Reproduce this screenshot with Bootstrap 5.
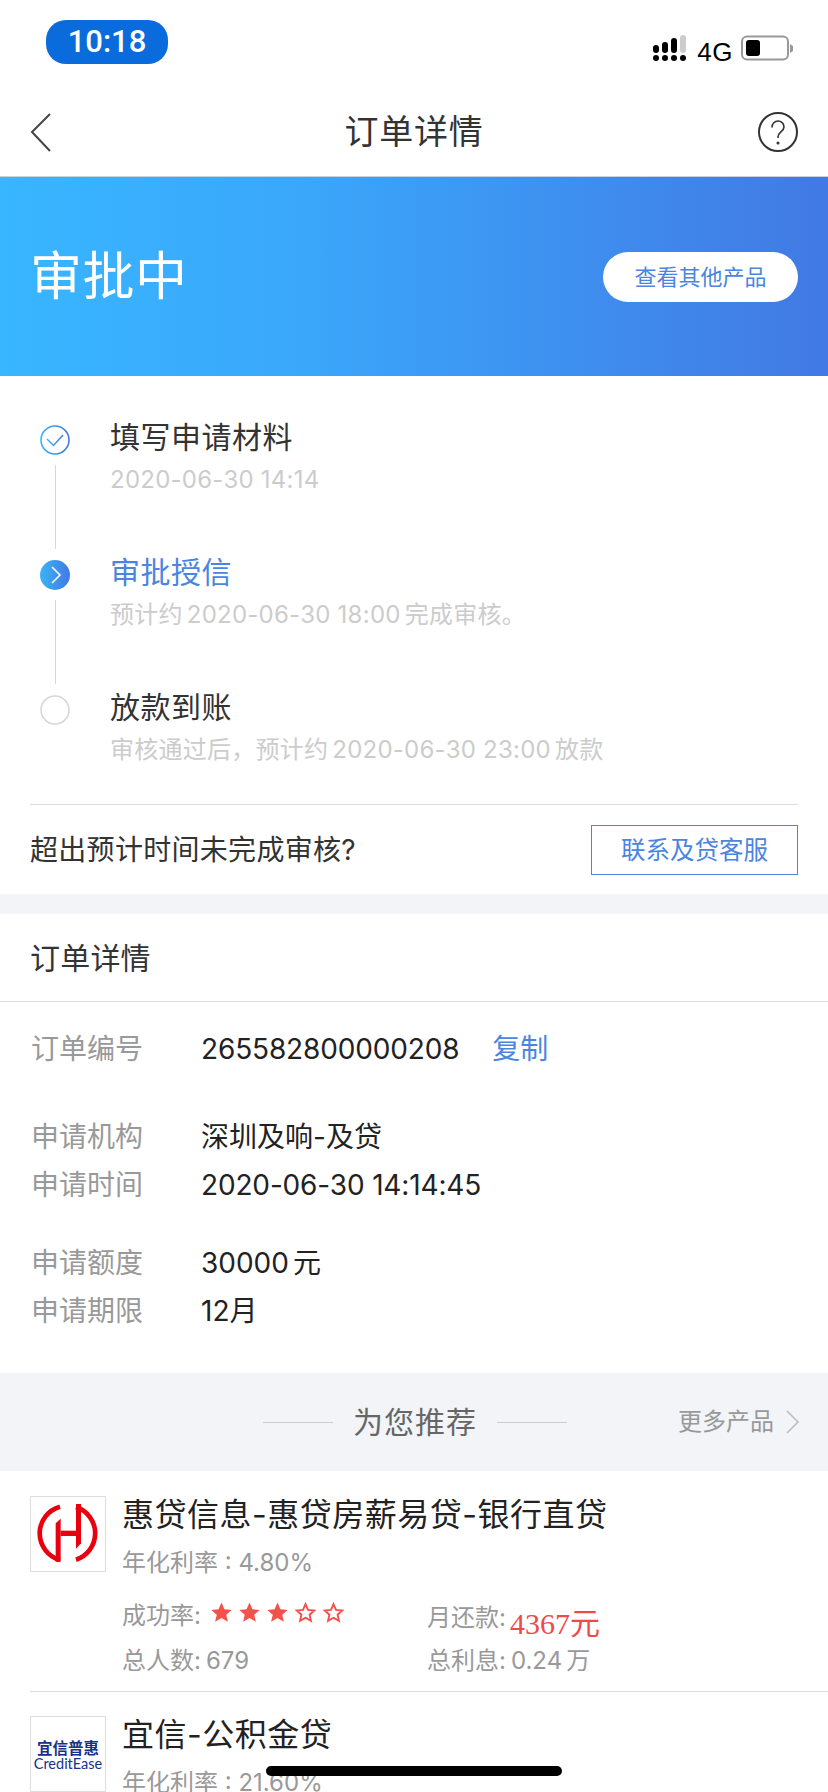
<!doctype html>
<html lang="zh-CN">
<head>
<meta charset="utf-8">
<title>订单详情</title>
<link href="https://cdn.jsdelivr.net/npm/bootstrap@5.3.0/dist/css/bootstrap.min.css" rel="stylesheet">
<style>
body{margin:0;background:#fff;font-family:Inter,"Noto Sans CJK SC",sans-serif;color:#333}
.phone{position:relative;width:828px;height:1792px;overflow:hidden;background:#fff}
.stat-bar{height:88px;padding:20px 34px 0 46px}
.time-pill{width:122px;height:44px;border-radius:20px;background:#0a6cdc;color:#fff;font:500 31px/44px Roboto,sans-serif;text-align:center}
.stat-right{padding-top:15px;gap:8px}
.sig-icon{margin-right:3px}
.net-label{font:400 26px/26px "Liberation Sans",sans-serif;color:#000;letter-spacing:.5px}
.top-nav{height:89px;padding:0 30px;border-bottom:1px solid #c9d3dc}
.nav-side{width:41px;flex:none;display:flex}
.nav-side.end{justify-content:flex-end}
.top-title{font-size:34px;line-height:44px;color:#333;letter-spacing:.8px}
.hero{height:199px;padding:0 30px;background:linear-gradient(90deg,#38b6ff 0%,#3aa8fb 35%,#4279e4 100%)}
.hero-title{font-size:52px;line-height:60px;color:#fff;font-weight:400;letter-spacing:.5px}
.hero-btn{width:195px;height:50px;border-radius:25px;background:#fff;color:#4a85e0;font-size:22px;line-height:50px;text-align:center;border:0;padding:0}
.steps{padding:49px 30px 0}
.step{display:flex}
.step-mark{width:80px;flex:none}
.dot{width:30px;height:30px;margin-left:10px;display:block}
.step-line{width:1px;height:84px;margin:10px 0 11px 25px;background:#d8d8d8}
.step-title{font-size:30px;line-height:30px;margin-top:-3px;margin-bottom:13px;color:#333;letter-spacing:.5px}
.step-title.now{color:#4a85e0}
.step-sub{font-size:24px;line-height:30px;color:#ccc;white-space:nowrap;letter-spacing:.25px}
.sub-num{margin:0 4px}
.step-end{height:109px}
.help-row{height:90px;margin:0 30px;border-top:1px solid #ddd}
.help-text{font-size:28px;color:#333;letter-spacing:.3px}
.help-btn{width:207px;height:50px;border:1px solid #4a85e0;color:#4a85e0;font-size:24.5px;line-height:48px;text-align:center;background:#fff;padding:0;border-radius:0}
.gap-band{height:20px;background:#f2f4f8}
.sec-head{height:88px;padding:0 30px;border-bottom:1px solid #ddd;font-size:30px;line-height:88px;color:#333;letter-spacing:.2px}
.info{padding:23px 31px 38px}
.info-row{display:flex;height:48px;align-items:center;font-size:28px}
.info-label{width:170px;color:#999;font-size:28px}
.info-val{color:#222}
.num-tight{letter-spacing:-.15px}
.unit-gap{margin-left:4px}
.colon-gap{margin-left:5px}
.copy-link{color:#4a85e0;margin-left:33px;text-decoration:none}
.sp-a{margin-bottom:40px}
.sp-b{margin-bottom:30px}
.rec-band{height:98px;background:#f2f4f8;padding:0 28px 0 30px;display:grid;grid-template-columns:1fr auto 1fr;align-items:center}
.rec-title{display:flex;align-items:center;gap:20px;font-size:30px;color:#666;letter-spacing:1px}
.rec-rule{width:70px;height:1px;background:#ccc}
.more-link{justify-self:end;font-size:24px;color:#999;display:flex;align-items:center;gap:11px;text-decoration:none}
.prod{display:flex;margin-left:30px;padding-top:25px;height:221px;border-bottom:1px solid #ddd}
.prod.last{padding-top:24px;border-bottom:0;height:auto}
.prod-logo{width:76px;height:76px;flex:none;border:1px solid #ddd;display:flex;flex-direction:column;align-items:center;justify-content:center}
.prod-logo svg{display:block}
.prod-body{margin-left:16px;margin-top:1px}
.prod-name{font-size:32px;line-height:36px;color:#222;letter-spacing:.5px;white-space:nowrap}
.prod-rate{font-size:24px;line-height:36px;margin-top:12px;color:#999}
.prod-stats{display:grid;grid-template-columns:305px 1fr;margin-top:17px;row-gap:7px;font-size:24px;line-height:36px;color:#999}
.stars{display:inline-flex;gap:7px;vertical-align:1px;margin-left:10px}
.stars svg{width:21px;height:21px;display:block}
.pay{font:30px/36px "Liberation Serif",serif;color:#ee4a4a;position:relative;top:8px;margin-left:4px}
.logo-cn{font:700 15.5px/18px "Noto Sans CJK SC",sans-serif;color:#14318c}
.logo-en{font:400 14.500px/15px Lato,sans-serif;color:#14318c}
.home-bar{position:absolute;left:266px;top:1766px;width:296px;height:10px;border-radius:5px;background:#000}
</style>
</head>
<body>
<div class="phone">
  <div class="stat-bar d-flex justify-content-between">
    <div class="time-pill">10:18</div>
    <div class="stat-right d-flex align-items-start">
      <svg class="sig-icon" width="33" height="27" viewBox="0 0 33 27"><g fill="#000"><circle cx="3" cy="23" r="3"/><circle cx="12" cy="23" r="3"/><circle cx="21" cy="23" r="3"/><circle cx="30" cy="23" r="3"/><rect x="0" y="10" width="6" height="8" rx="3"/><rect x="9" y="7" width="6" height="11" rx="3"/><rect x="18" y="3" width="6" height="15" rx="3"/></g><rect x="27" y="0" width="6" height="18" rx="3" fill="#ccc"/></svg>
      <span class="net-label mt-1">4G</span>
      <svg width="53" height="26" viewBox="0 0 53 26"><rect x="1" y="1.5" width="46" height="23" rx="5" fill="none" stroke="#999" stroke-width="2"/><rect x="5" y="5" width="14" height="16" rx="3" fill="#000"/><path d="M49 9l3 2v5l-3 2z" fill="#999"/></svg>
    </div>
  </div>
  <div class="top-nav d-flex align-items-center justify-content-between">
    <div class="nav-side"><svg width="22" height="40" viewBox="0 0 22 40" class="d-block"><path d="M20 2 2 20l18 19" fill="none" stroke="#444" stroke-width="2"/></svg></div>
    <div class="top-title">订单详情</div>
    <div class="nav-side end"><svg width="40" height="40" viewBox="0 0 40 40" class="d-block"><circle cx="20" cy="20" r="19" fill="none" stroke="#333" stroke-width="2"/><path d="M14 15.500c0-4 2.800-6.500 6-6.500s6 2.500 6 6c0 4.500-6 5-6 10v1" fill="none" stroke="#333" stroke-width="1.600"/><circle cx="20" cy="31" r="1.500" fill="#333"/></svg></div>
  </div>
  <div class="hero d-flex align-items-center justify-content-between">
    <div class="hero-title">审批中</div>
    <button class="hero-btn" type="button">查看其他产品</button>
  </div>
  <div class="steps">
    <div class="step">
      <div class="step-mark">
        <svg class="dot" viewBox="0 0 30 30"><defs><linearGradient id="g1" x1="0" x2="1"><stop offset="0" stop-color="#3bb4f5"/><stop offset="1" stop-color="#4279e4"/></linearGradient></defs><circle cx="15" cy="15" r="14" fill="none" stroke="url(#g1)" stroke-width="1.600"/><path d="M7 14l6.500 6.500L23 10" fill="none" stroke="url(#g1)" stroke-width="1.500"/></svg>
        <div class="step-line"></div>
      </div>
      <div>
        <div class="step-title">填写申请材料</div>
        <div class="step-sub">2020-06-30 14:14</div>
      </div>
    </div>
    <div class="step">
      <div class="step-mark">
        <svg class="dot" viewBox="0 0 30 30"><circle cx="15" cy="15" r="15" fill="url(#g1)"/><path d="M12 7l8 8-8 8" fill="none" stroke="#fff" stroke-width="1.600"/></svg>
        <div class="step-line"></div>
      </div>
      <div>
        <div class="step-title now">审批授信</div>
        <div class="step-sub">预计约<span class="sub-num">2020-06-30 18:00</span>完成审核。</div>
      </div>
    </div>
    <div class="step step-end">
      <div class="step-mark">
        <svg class="dot" viewBox="0 0 30 30"><circle cx="15" cy="15" r="14" fill="none" stroke="#d8d8d8" stroke-width="1.600"/></svg>
      </div>
      <div>
        <div class="step-title">放款到账</div>
        <div class="step-sub">审核通过后，预计约<span class="sub-num">2020-06-30 23:00</span>放款</div>
      </div>
    </div>
  </div>
  <div class="help-row d-flex align-items-center justify-content-between">
    <span class="help-text">超出预计时间未完成审核?</span>
    <button class="help-btn" type="button">联系及贷客服</button>
  </div>
  <div class="gap-band"></div>
  <div class="sec-head">订单详情</div>
  <div class="info">
    <div class="info-row sp-a"><span class="info-label">订单编号</span><span class="info-val num-tight">265582800000208</span><a class="copy-link" href="#">复制</a></div>
    <div class="info-row"><span class="info-label">申请机构</span><span class="info-val">深圳及响-及贷</span></div>
    <div class="info-row sp-b"><span class="info-label">申请时间</span><span class="info-val num-tight">2020-06-30 14:14:45</span></div>
    <div class="info-row"><span class="info-label">申请额度</span><span class="info-val">30000<span class="unit-gap">元</span></span></div>
    <div class="info-row"><span class="info-label">申请期限</span><span class="info-val">12月</span></div>
  </div>
  <div class="rec-band">
    <span></span>
    <div class="rec-title"><span class="rec-rule"></span>为您推荐<span class="rec-rule"></span></div>
    <a class="more-link" href="#">更多产品<svg width="15" height="24" viewBox="0 0 15 24"><path d="M2 1l11 11L2 23" fill="none" stroke="#bbb" stroke-width="1.500"/></svg></a>
  </div>
  <div class="prod">
    <div class="prod-logo">
      <svg width="74" height="74" viewBox="18 21 222 222"><g fill="#e8000f"><path d="M105 50A83 83 0 0 0 105 210" fill="none" stroke="#e8000f" stroke-width="14"/><path d="M153 51A83 83 0 0 1 153 209" fill="none" stroke="#e8000f" stroke-width="14"/><path d="M92 100 107 86V215H92Z"/><path d="M153 42H168V160L153 176Z"/><rect x="107" y="122" width="46" height="16"/></g></svg>
    </div>
    <div class="prod-body">
      <div class="prod-name">惠贷信息-惠贷房薪易贷-银行直贷</div>
      <div class="prod-rate">年化利率 : 4.80%</div>
      <div class="prod-stats">
        <div>成功率:<span class="stars">
          <svg viewBox="0 0 20 20"><path d="M10 .5l2.800 6.400 6.900.6-5.200 4.600 1.600 6.800L10 15.300l-6.100 3.600 1.600-6.800L.3 7.500l6.900-.6z" fill="#f5504a"/></svg>
          <svg viewBox="0 0 20 20"><path d="M10 .5l2.800 6.400 6.900.6-5.200 4.600 1.600 6.800L10 15.300l-6.100 3.600 1.600-6.800L.3 7.500l6.900-.6z" fill="#f5504a"/></svg>
          <svg viewBox="0 0 20 20"><path d="M10 .5l2.800 6.400 6.900.6-5.200 4.600 1.600 6.800L10 15.300l-6.100 3.600 1.600-6.800L.3 7.500l6.900-.6z" fill="#f5504a"/></svg>
          <svg viewBox="0 0 20 20"><path d="M10 2l2.400 5.500 6 .6-4.500 4 1.300 5.900L10 15 4.800 18l1.300-5.900-4.500-4 6-.6z" fill="none" stroke="#f5504a" stroke-width="1.800"/></svg>
          <svg viewBox="0 0 20 20"><path d="M10 2l2.400 5.500 6 .6-4.500 4 1.300 5.900L10 15 4.800 18l1.300-5.900-4.500-4 6-.6z" fill="none" stroke="#f5504a" stroke-width="1.800"/></svg>
        </span></div>
        <div>月还款:<span class="pay">4367元</span></div>
        <div>总人数:<span class="colon-gap">679</span></div>
        <div>总利息:<span class="colon-gap">0.24</span><span class="unit-gap">万</span></div>
      </div>
    </div>
  </div>
  <div class="prod last">
    <div class="prod-logo">
      <div class="logo-cn">宜信普惠</div>
      <div class="logo-en">CreditEase</div>
    </div>
    <div class="prod-body">
      <div class="prod-name">宜信-公积金贷</div>
      <div class="prod-rate">年化利率 : 21.60%</div>
    </div>
  </div>
  <div class="home-bar"></div>
</div>
<script src="https://cdn.jsdelivr.net/npm/bootstrap@5.3.0/dist/js/bootstrap.bundle.min.js"></script>
</body>
</html>
